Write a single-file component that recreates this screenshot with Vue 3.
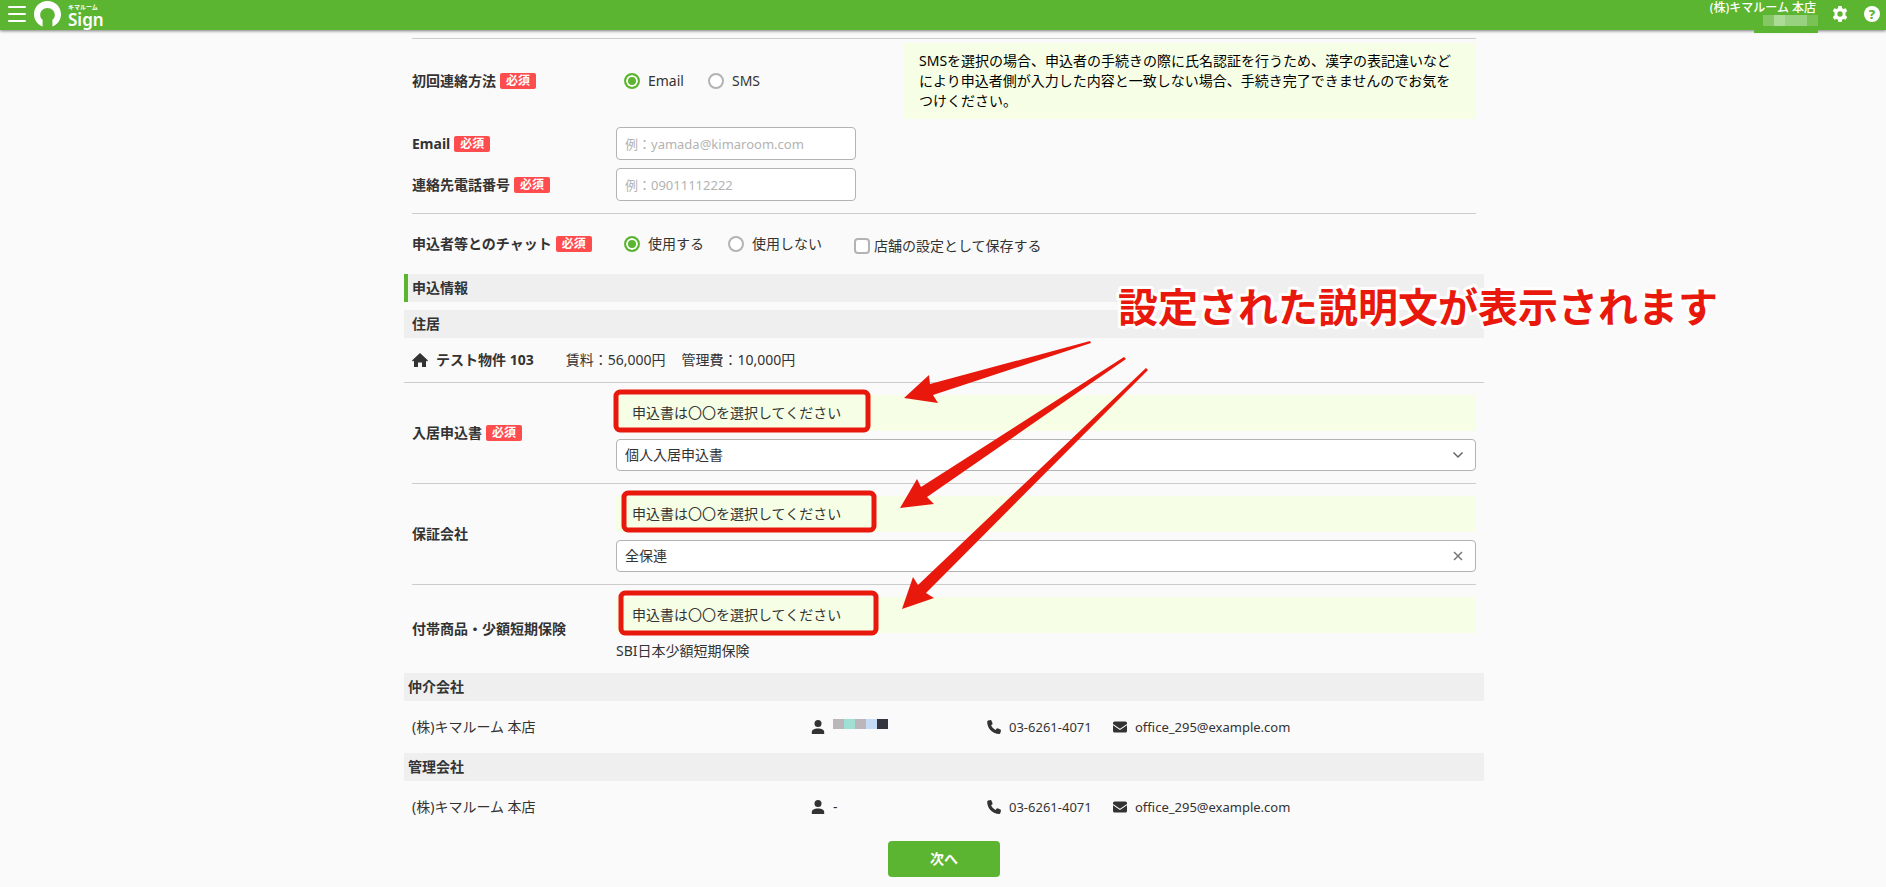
<template>
  <div class="page">
    <header class="header">
      <button type="button" class="header__menu" aria-label="メニュー">
        <span></span>
        <span></span>
        <span></span>
      </button>
      <a href="#" class="header__logo">
        <svg width="27" height="26" viewBox="0 0 27 26" aria-hidden="true">
          <path
            fill="#fff"
            d="M8.6 25.6 C3.4 23.4 0 18.8 0 13.2 C0 5.8 6 0 13.5 0 C21 0 27 5.8 27 13.2 C27 18.8 23.6 23.4 18.4 25.6 L18.4 18.8 C19.9 17.6 20.8 15.9 20.8 13.9 C20.8 10 17.6 7 13.5 7 C9.4 7 6.2 10 6.2 13.9 C6.2 15.9 7.1 17.6 8.6 18.8 Z"
          />
        </svg>
        <span class="header__name">
          <span class="header__kana">キマルーム</span>
          <span class="header__product">Sign</span>
        </span>
      </a>
      <div class="header__account">
        <span class="header__company">(株)キマルーム 本店</span>
        <span class="header__user">
          <i v-for="(color, i) in userBlocks" :key="i" :style="{ background: color }"></i>
        </span>
        <span class="header__tab"></span>
      </div>
      <button type="button" class="header__icon" aria-label="設定">
        <svg width="16" height="16" viewBox="0 0 24 24" aria-hidden="true">
          <path
            fill="#fff"
            d="M9.6 0h4.8l.7 3.4 2 1.1 3.3-1.1 2.4 4.1-2.6 2.3v4.4l2.6 2.3-2.4 4.1-3.3-1.1-2 1.1-.7 3.4H9.6l-.7-3.4-2-1.1-3.3 1.1-2.4-4.1 2.6-2.3V9.8L1.2 7.5l2.4-4.1 3.3 1.1 2-1.1zM12 8a4 4 0 1 0 0 8 4 4 0 0 0 0-8z"
          />
        </svg>
      </button>
      <button type="button" class="header__icon header__icon--help" aria-label="ヘルプ">?</button>
    </header>

    <div class="content">
      <main class="form">
        <section class="group">
          <div class="row">
            <span id="contact-label" class="row__label">初回連絡方法<em class="required">必須</em></span>
            <div class="row__field row__field--split" role="radiogroup" aria-labelledby="contact-label">
              <div class="options">
                <label v-for="item in contactOptions" :key="item" class="option">
                  <input v-model="contact" type="radio" name="contact" :value="item" />{{ item }}
                </label>
              </div>
              <p class="note note--dark">SMSを選択の場合、申込者の手続きの際に氏名認証を行うため、漢字の表記違いなどにより申込者側が入力した内容と一致しない場合、手続き完了できませんのでお気をつけください。</p>
            </div>
          </div>
          <div class="row">
            <label for="email" class="row__label">Email<em class="required">必須</em></label>
            <div class="row__field">
              <input id="email" v-model="email" class="text" type="text" placeholder="例：yamada@kimaroom.com" />
            </div>
          </div>
          <div class="row">
            <label for="tel" class="row__label">連絡先電話番号<em class="required">必須</em></label>
            <div class="row__field">
              <input id="tel" v-model="tel" class="text" type="text" placeholder="例：09011112222" />
            </div>
          </div>
        </section>

        <section class="group group--chat">
          <div class="row">
            <span id="chat-label" class="row__label">申込者等とのチャット<em class="required">必須</em></span>
            <div class="row__field options" role="radiogroup" aria-labelledby="chat-label">
              <label v-for="item in chatOptions" :key="item" class="option">
                <input v-model="chat" type="radio" name="chat" :value="item" />{{ item }}
              </label>
              <label class="save">
                <input v-model="saveDefault" type="checkbox" />店舗の設定として保存する
              </label>
            </div>
          </div>
        </section>

        <h2 class="band band--main">申込情報</h2>
        <h3 class="band band--sub">住居</h3>

        <div class="property">
          <svg width="16" height="16" viewBox="0 0 16 16" aria-hidden="true">
            <path fill="#333" d="M8 1 16 8.4 15 9.5 14 8.7V15H10V10.5H6V15H2V8.7L1 9.5 0 8.4Z" />
          </svg>
          <strong class="property__name">テスト物件 103</strong>
          <span>賃料：56,000円</span>
          <span>管理費：10,000円</span>
        </div>

        <section class="group">
          <div class="row">
            <label for="application" class="row__label">入居申込書<em class="required">必須</em></label>
            <div class="row__field row__field--stack">
              <p class="note">申込書は〇〇を選択してください</p>
              <div class="select">
                <select id="application">
                  <option>個人入居申込書</option>
                </select>
                <svg width="12" height="12" viewBox="0 0 12 12" aria-hidden="true">
                  <path d="M1.5 3.5 6 8 10.5 3.5" fill="none" stroke="#666" stroke-width="1.5" />
                </svg>
              </div>
            </div>
          </div>
        </section>

        <section class="group">
          <div class="row">
            <label for="guarantor" class="row__label">保証会社</label>
            <div class="row__field row__field--stack">
              <p class="note">申込書は〇〇を選択してください</p>
              <div class="select">
                <select id="guarantor">
                  <option>全保連</option>
                </select>
                <svg width="12" height="12" viewBox="0 0 12 12" aria-hidden="true">
                  <path d="M2 2 10 10 M10 2 2 10" fill="none" stroke="#777" stroke-width="1.5" />
                </svg>
              </div>
            </div>
          </div>
        </section>

        <section class="group group--last">
          <div class="row">
            <span class="row__label">付帯商品・少額短期保険</span>
            <div class="row__field row__field--stack">
              <p class="note">申込書は〇〇を選択してください</p>
              <span>SBI日本少額短期保険</span>
            </div>
          </div>
        </section>

        <template v-for="company in companies" :key="company.title">
          <h3 class="band band--company">{{ company.title }}</h3>
          <div class="company">
            <span>(株)キマルーム 本店</span>
            <span class="company__item">
              <svg width="14" height="14" viewBox="0 0 14 14" aria-hidden="true">
                <circle cx="7" cy="3.5" r="3.5" fill="#333" />
                <path fill="#333" d="M.8 14V12C.8 9.8 3.3 8.4 7 8.4S13.2 9.8 13.2 12V14Z" />
              </svg>
              <span v-if="company.person">{{ company.person }}</span>
              <span v-else class="company__mosaic">
                <i v-for="(color, i) in personBlocks" :key="i" :style="{ background: color }"></i>
              </span>
            </span>
            <span class="company__item company__item--contact">
              <svg width="14" height="14" viewBox="0 0 14 14" aria-hidden="true">
                <path
                  fill="#333"
                  d="M1 .6 3.7 0 4.4.4 5.6 3.5 5.4 4.2 4.1 5.3C5 7.2 6.6 8.9 8.6 9.9L9.7 8.5 10.5 8.3 13.5 9.6 14 10.4 13.3 13.2 12.6 13.9C5.6 14 0 8.2.2 1.4Z"
                />
              </svg>
              03-6261-4071
            </span>
            <span class="company__item company__item--contact">
              <svg width="14" height="14" viewBox="0 0 14 14" aria-hidden="true">
                <path
                  fill="#333"
                  d="M1.5 1.5H12.5Q14 1.5 14 3V4L7 8.8 0 4V3Q0 1.5 1.5 1.5ZM0 5.3 7 10.1 14 5.3V11Q14 12.5 12.5 12.5H1.5Q0 12.5 0 11Z"
                />
              </svg>
              office_295@example.com
            </span>
          </div>
        </template>

        <button type="button" class="next">次へ</button>

        <svg class="annotation">
          <rect x="212" y="362" width="252" height="38" rx="4" />
          <rect x="220" y="463" width="250" height="37" rx="4" />
          <rect x="217" y="563" width="255" height="40" rx="4" />
          <path d="M500 368 525 345 526 354 686 311 687 313 529 365 534 373Z" />
          <path d="M496 478 513 449 517 457 720 327 722 329 523 467 530 474Z" />
          <path d="M498 579 509 547 514 555 742 338 744 340 522 563 530 568Z" />
          <text x="714" y="292">設定された説明文が表示されます</text>
        </svg>
      </main>
    </div>
  </div>
</template>

<script setup>
import { ref } from 'vue'

const contactOptions = ['Email', 'SMS']
const chatOptions = ['使用する', '使用しない']

const contact = ref('Email')
const chat = ref('使用する')
const email = ref('')
const tel = ref('')
const saveDefault = ref(false)

const companies = [
  { title: '仲介会社', person: '' },
  { title: '管理会社', person: '-' }
]

const userBlocks = ['#84c764', '#acda97', '#98d17f', '#98d17f', '#7ac256']
const personBlocks = ['#bab6ba', '#a0dfd3', '#bab6ba', '#c5dbf5', '#333541']
</script>

<style>
body {
  background: #fafafa;
}
</style>

<style scoped>
.page {
  color: #333;
  font-family: 'Noto Sans', 'Noto Sans CJK JP', sans-serif;
  font-size: 14px;
  line-height: 20px;
}

.page * {
  box-sizing: border-box;
}

button,
input,
select {
  font: inherit;
  color: inherit;
}

button {
  border: 0;
  padding: 0;
  background: none;
  cursor: pointer;
}

.header {
  position: relative;
  z-index: 1;
  display: flex;
  align-items: center;
  height: 30px;
  padding: 0 6px 2px 8px;
  background: #5cb531;
  box-shadow: 0 1px 3px rgba(0, 0, 0, 0.5);
  color: #fff;
}

.header__menu {
  display: flex;
  flex-direction: column;
  gap: 5px;
  width: 18px;
}

.header__menu span {
  height: 2px;
  border-radius: 1px;
  background: #fff;
}

.header__logo {
  display: flex;
  gap: 7px;
  margin-left: 8px;
  color: #fff;
  text-decoration: none;
}

.header__name {
  display: flex;
  flex-direction: column;
}

.header__kana {
  font-size: 6px;
  font-weight: 700;
  line-height: 12px;
}

.header__product {
  font-size: 17px;
  font-weight: 600;
  line-height: 13px;
}

.header__account {
  position: relative;
  display: flex;
  flex-direction: column;
  align-items: flex-end;
  align-self: flex-start;
  margin-left: auto;
}

.header__company {
  padding-right: 2px;
  font-size: 12px;
  font-weight: 500;
  line-height: 15px;
}

.header__user {
  display: flex;
}

.header__user i {
  width: 11px;
  height: 11px;
}

.header__tab {
  position: absolute;
  top: 28px;
  right: 0;
  width: 64px;
  height: 5px;
  background: #5cb531;
}

.header__icon {
  display: flex;
  width: 16px;
  height: 16px;
  margin-left: 14px;
}

.header__icon--help {
  justify-content: center;
  margin-left: 16px;
  border-radius: 50%;
  background: #fff;
  color: #5cb531;
  font-size: 13px;
  font-weight: 800;
  line-height: 16px;
}

.content {
  padding-left: 2px;
}

.form {
  position: relative;
  max-width: 1080px;
  margin: 0 auto;
  padding-top: 8px;
  padding-bottom: 10px;
}

.group {
  display: flex;
  flex-direction: column;
  gap: 8px;
  margin: 0 8px;
  padding: 12px 0;
  border-bottom: 1px solid #ccc;
}

.group:first-child {
  padding-top: 4px;
  border-top: 1px solid #ccc;
}

.group--chat {
  height: 60px;
  justify-content: center;
  border-bottom: 0;
}

.group--last {
  border-bottom: 0;
}

.row {
  display: flex;
  align-items: center;
}

.row__label {
  display: flex;
  align-items: center;
  width: 204px;
  font-weight: 700;
}

.required {
  width: 36px;
  height: 16px;
  margin-left: 4px;
  border-radius: 2px;
  background: #ff4d4d;
  color: #fff;
  font-size: 12px;
  font-style: normal;
  line-height: 16px;
  text-align: center;
}

.row__field {
  flex: 1;
}

.row__field--split {
  display: flex;
  align-items: center;
  justify-content: space-between;
}

.row__field--stack {
  display: flex;
  flex-direction: column;
  gap: 8px;
}

.options {
  display: flex;
  align-items: center;
  gap: 24px;
  padding-left: 8px;
}

.option {
  display: flex;
  align-items: center;
  gap: 8px;
}

.option input {
  appearance: none;
  width: 16px;
  height: 16px;
  margin: 0;
  border: 2px solid #b3b3b3;
  border-radius: 50%;
  background: #fff;
}

.option input:checked {
  border-color: #5cb531;
  background: #5cb531;
  box-shadow: inset 0 0 0 2px #fff;
}

.save {
  display: flex;
  align-items: center;
  gap: 4px;
  margin-left: 8px;
  padding-top: 4px;
}

.save input {
  appearance: none;
  width: 16px;
  height: 16px;
  margin: 0;
  border: 2px solid #b3b3b3;
  border-radius: 4px;
  background: #fff;
}

.note {
  margin: 0;
  padding: 8px 16px;
  background: #f6ffe5;
}

.note--dark {
  width: 573px;
  color: #000;
}

.text {
  display: block;
  width: 240px;
  height: 33px;
  padding: 0 8px;
  border: 1px solid #b3b3b3;
  border-radius: 4px;
  background: #fff;
  font-size: 13px;
}

.text::placeholder {
  color: #b3b3b3;
}

.select {
  position: relative;
  display: flex;
}

.select select {
  appearance: none;
  width: 100%;
  height: 32px;
  padding: 0 8px;
  border: 1px solid #b3b3b3;
  border-radius: 4px;
  background: #fff;
}

.select svg {
  position: absolute;
  top: 10px;
  right: 12px;
  pointer-events: none;
}

.band {
  margin: 0;
  padding: 4px 8px;
  background: #efefef;
  font-size: 14px;
  font-weight: 700;
}

.band--main {
  padding-left: 4px;
  border-left: 4px solid #5cb531;
}

.band--sub {
  margin-top: 8px;
}

.band--company {
  padding-left: 4px;
}

.property {
  display: flex;
  align-items: center;
  gap: 16px;
  height: 45px;
  padding: 0 8px;
  border-bottom: 1px solid #ccc;
}

.property__name {
  margin: 0 16px 0 -8px;
}

.company {
  display: grid;
  grid-template-columns: 399px 176px 126px 1fr;
  align-items: center;
  height: 52px;
  padding: 0 8px;
}

.company__item {
  display: flex;
  align-items: center;
  gap: 8px;
}

.company__item--contact {
  font-size: 13px;
}

.company__mosaic {
  display: flex;
  padding-bottom: 6px;
}

.company__mosaic i {
  width: 11px;
  height: 10px;
}

.next {
  display: block;
  width: 112px;
  height: 36px;
  margin: 8px auto 0;
  border-radius: 4px;
  background: #5cb531;
  color: #fff;
  font-weight: 700;
}

/* callouts drawn over the form */
.annotation {
  position: absolute;
  top: 0;
  left: 0;
  width: 100%;
  height: 100%;
  overflow: visible;
  pointer-events: none;
}

.annotation rect {
  fill: none;
  stroke: #e8190c;
  stroke-width: 5px;
}

.annotation path {
  fill: #e8190c;
}

.annotation text {
  fill: #e8190c;
  stroke: #fff;
  stroke-width: 6px;
  stroke-linejoin: round;
  paint-order: stroke;
  font-size: 40px;
  font-weight: 700;
}
</style>
